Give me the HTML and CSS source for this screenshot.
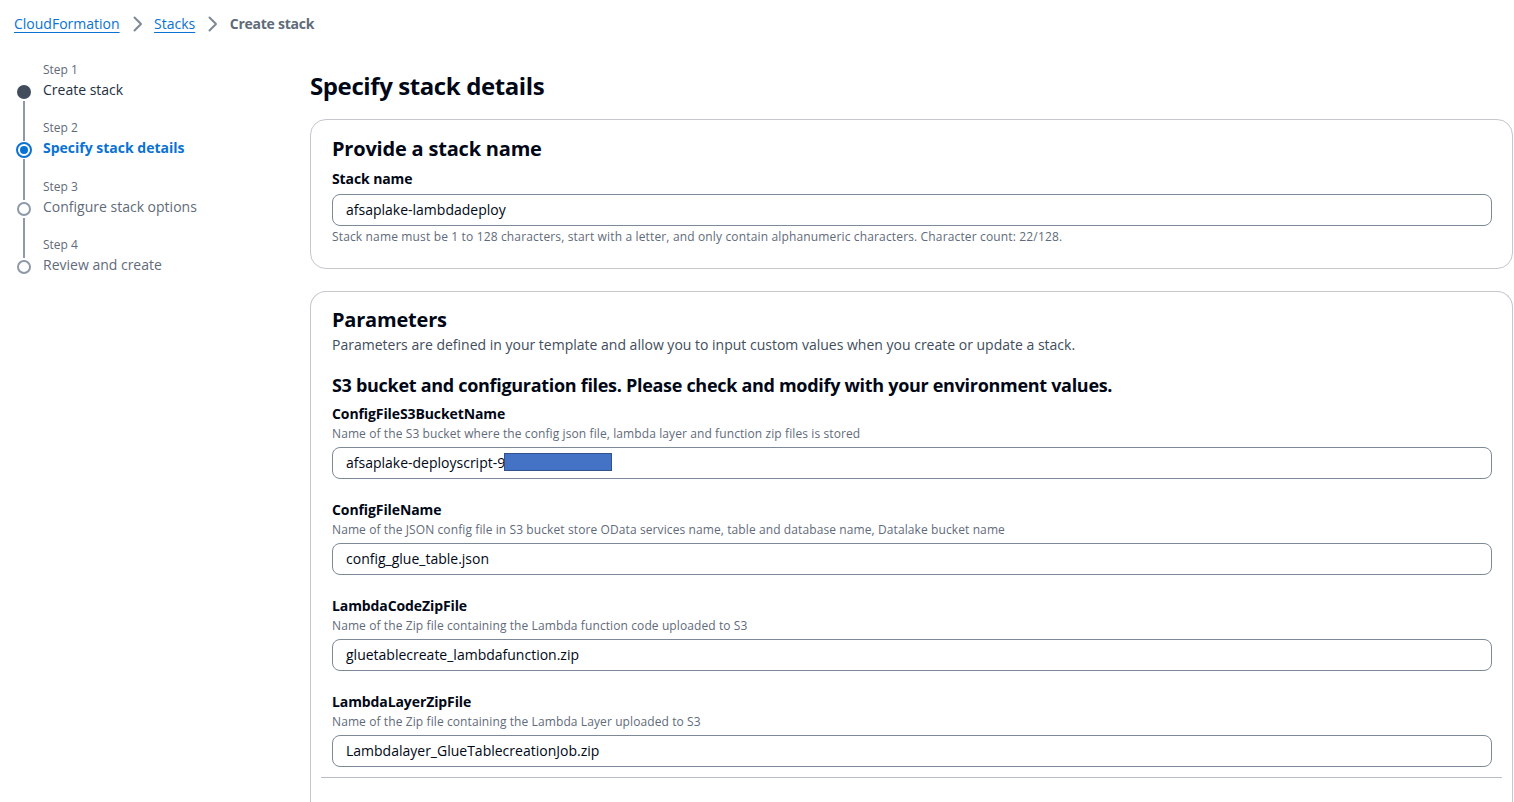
FILE: index.html
```html
<!DOCTYPE html>
<html lang="en">
<head>
<meta charset="utf-8">
<title>Create stack - CloudFormation</title>
<link rel="stylesheet" href="styles.css">
</head>
<body>
<div class="page">
  <nav class="breadcrumbs">
    <a class="crumb-link" href="#">CloudFormation</a>
    <svg class="chev" viewBox="0 0 16 16" width="16" height="16"><path d="M4.5 1.5 L11 8 L4.5 14.5" fill="none" stroke="#7d8998" stroke-width="2" stroke-linejoin="round" stroke-linecap="round"/></svg>
    <a class="crumb-link" href="#">Stacks</a>
    <svg class="chev" viewBox="0 0 16 16" width="16" height="16"><path d="M4.5 1.5 L11 8 L4.5 14.5" fill="none" stroke="#7d8998" stroke-width="2" stroke-linejoin="round" stroke-linecap="round"/></svg>
    <span class="crumb-current">Create stack</span>
  </nav>

  <div class="layout">
    <aside class="steps">
      <div class="step step-first">
        <div class="rail"><span class="seg seg-top"></span><span class="dot dot-done"></span><span class="seg seg-bottom"></span></div>
        <div class="step-text">
          <div class="step-num">Step 1</div>
          <div class="step-title title-done">Create stack</div>
        </div>
      </div>
      <div class="step">
        <div class="rail"><span class="seg seg-top"></span><span class="dot dot-active"><span class="dot-core"></span></span><span class="seg seg-bottom"></span></div>
        <div class="step-text">
          <div class="step-num">Step 2</div>
          <div class="step-title title-active">Specify stack details</div>
        </div>
      </div>
      <div class="step">
        <div class="rail"><span class="seg seg-top"></span><span class="dot dot-todo"></span><span class="seg seg-bottom"></span></div>
        <div class="step-text">
          <div class="step-num">Step 3</div>
          <div class="step-title title-todo">Configure stack options</div>
        </div>
      </div>
      <div class="step step-last">
        <div class="rail"><span class="seg seg-top"></span><span class="dot dot-todo"></span><span class="seg seg-bottom"></span></div>
        <div class="step-text">
          <div class="step-num">Step 4</div>
          <div class="step-title title-todo">Review and create</div>
        </div>
      </div>
    </aside>

    <main class="main">
      <h1 class="page-title">Specify stack details</h1>

      <section class="card card-name">
        <h2 class="card-title">Provide a stack name</h2>
        <div class="field field-first">
          <div class="label">Stack name</div>
          <div class="input">afsaplake-lambdadeploy</div>
          <div class="hint">Stack name must be 1 to 128 characters, start with a letter, and only contain alphanumeric characters. Character count: 22/128.</div>
        </div>
      </section>

      <section class="card card-params">
        <h2 class="card-title">Parameters</h2>
        <p class="card-desc">Parameters are defined in your template and allow you to input custom values when you create or update a stack.</p>
        <h3 class="group-title">S3 bucket and configuration files. Please check and modify with your environment values.</h3>

        <div class="field">
          <div class="label">ConfigFileS3BucketName</div>
          <div class="desc">Name of the S3 bucket where the config json file, lambda layer and function zip files is stored</div>
          <div class="input input-redacted">afsaplake-deployscript-9<span class="redact"></span></div>
        </div>

        <div class="field">
          <div class="label">ConfigFileName</div>
          <div class="desc">Name of the JSON config file in S3 bucket store OData services name, table and database name, Datalake bucket name</div>
          <div class="input">config_glue_table.json</div>
        </div>

        <div class="field">
          <div class="label">LambdaCodeZipFile</div>
          <div class="desc">Name of the Zip file containing the Lambda function code uploaded to S3</div>
          <div class="input">gluetablecreate_lambdafunction.zip</div>
        </div>

        <div class="field">
          <div class="label">LambdaLayerZipFile</div>
          <div class="desc">Name of the Zip file containing the Lambda Layer uploaded to S3</div>
          <div class="input">Lambdalayer_GlueTablecreationJob.zip</div>
        </div>

        <div class="divider"></div>
        <div class="card-rest"></div>
      </section>
    </main>
  </div>
</div>
</body>
</html>
```

FILE: styles.css
```css
html, body {
  margin: 0;
  padding: 0;
  overflow: hidden;
  background: #ffffff;
}

body {
  font-family: "Open Sans", "Noto Sans", "Liberation Sans", sans-serif;
  color: #000716;
  font-size: 14px;
  line-height: 20px;
}

.page {
  padding-top: 14px;
}

/* Breadcrumbs */
.breadcrumbs {
  display: flex;
  align-items: center;
  height: 20px;
  padding-left: 14px;
  font-size: 14px;
  line-height: 20px;
}

.crumb-link {
  color: #0972d3;
  text-decoration: underline;
  text-underline-offset: 3px;
  text-decoration-thickness: 1px;
}

.chev {
  margin: 0 8.5px 0 10px;
  flex: none;
}

.crumb-current {
  color: #5f6b7a;
  font-weight: 700;
  letter-spacing: -0.25px;
}

/* Layout */
.layout {
  display: flex;
  margin-top: 28px;
}

.steps {
  width: 296px;
  padding-left: 14px;
  flex: none;
}

.step {
  display: flex;
  height: 58.3px;
}

.rail {
  width: 20px;
  display: flex;
  flex-direction: column;
  align-items: center;
  flex: none;
}

.seg {
  width: 2px;
  background: #8d99a8;
}

.seg-top {
  height: 21px;
  margin-bottom: 2px;
}

.seg-bottom {
  flex: 1;
  margin-top: 2px;
}

.step-first .seg-top,
.step-last .seg-bottom {
  background: transparent;
}

.dot {
  width: 14px;
  height: 14px;
  box-sizing: border-box;
  border-radius: 50%;
  flex: none;
  display: flex;
  align-items: center;
  justify-content: center;
}

.dot-done {
  background: #414d5c;
}

.dot-active {
  width: 16px;
  height: 16px;
  margin: -1px 0;
  border: 2px solid #0972d3;
  background: #ffffff;
}

.dot-core {
  width: 8px;
  height: 8px;
  border-radius: 50%;
  background: #0972d3;
}

.dot-todo {
  border: 2px solid #8d99a8;
  background: #ffffff;
}

.step-text {
  margin-left: 9px;
}

.step-num {
  font-size: 12px;
  line-height: 16px;
  color: #5f6b7a;
}

.step-title {
  margin-top: 2px;
  font-size: 14px;
  line-height: 20px;
}

.title-done {
  color: #232f3e;
}

.title-active {
  color: #0972d3;
  font-weight: 700;
}

.title-todo {
  color: #5f6b7a;
}

/* Main */
.main {
  flex: 1;
  min-width: 0;
  padding-top: 9px;
}

.page-title {
  margin: 0;
  font-size: 24px;
  line-height: 30px;
  font-weight: 700;
  letter-spacing: -0.4px;
  color: #000716;
}

.card {
  margin: 18px 1px 0 0;
  border: 1px solid #c6c6cd;
  border-radius: 16px;
  padding: 17px 20px 23px 21px;
}

.card-params {
  margin-top: 22px;
  padding-top: 16px;
  padding-bottom: 0;
  border-bottom: none;
  border-bottom-left-radius: 0;
  border-bottom-right-radius: 0;
}

.card-title {
  margin: 0;
  font-size: 20px;
  line-height: 24px;
  font-weight: 700;
  letter-spacing: -0.2px;
}

.field-first {
  margin-top: 13px;
}

.label {
  font-size: 14px;
  line-height: 22px;
  font-weight: 700;
  letter-spacing: -0.1px;
}

.input {
  margin-top: 4px;
  height: 32px;
  box-sizing: border-box;
  border: 1px solid #7d8998;
  border-radius: 8px;
  padding: 0 13px 0 13px;
  display: flex;
  align-items: center;
  font-size: 14px;
  line-height: 20px;
  color: #000716;
  white-space: nowrap;
}

.hint {
  margin-top: 3px;
  font-size: 12px;
  line-height: 16px;
  color: #5f6b7a;
  letter-spacing: 0.15px;
}

.card-desc {
  margin: 2px 0 0 0;
  font-size: 14px;
  line-height: 22px;
  color: #414d5c;
}

.group-title {
  margin: 18px 0 0 0;
  font-size: 18px;
  line-height: 22px;
  font-weight: 700;
  letter-spacing: -0.3px;
}

.field {
  margin-top: 7px;
}

.card-params .field + .field {
  margin-top: 20px;
}

.desc {
  margin-top: 1px;
  font-size: 12px;
  line-height: 16px;
  color: #5f6b7a;
  letter-spacing: 0.1px;
}

.card-params .input {
  margin-top: 5px;
}

.input-redacted {
  position: relative;
}

.redact {
  position: absolute;
  left: 171px;
  top: 5px;
  width: 108px;
  height: 18px;
  background: #4472c4;
  border: 1px solid #2f528f;
  box-sizing: border-box;
}

.divider {
  margin: 10px -10px 0 -11px;
  height: 1px;
  background: #b6bec9;
}

.card-rest {
  height: 60px;
}
```
